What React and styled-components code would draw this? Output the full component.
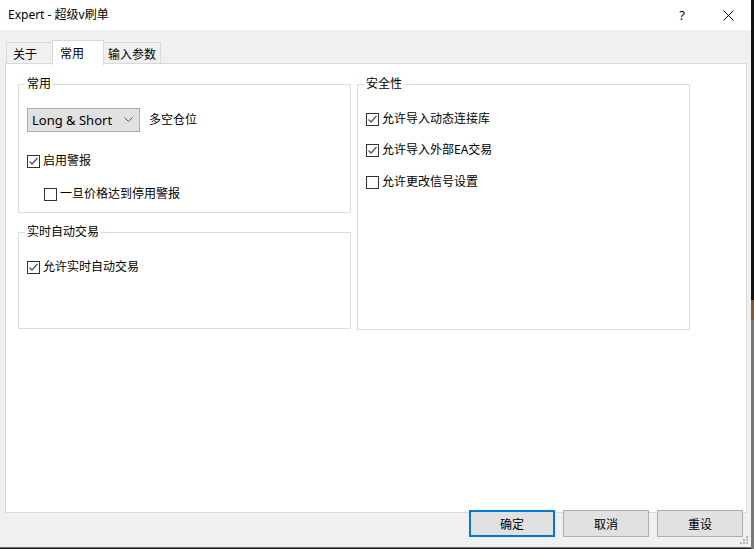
import React from "react";
import styled, { createGlobalStyle } from "styled-components";

const GlobalStyle = createGlobalStyle`
  html, body {
    margin: 0;
    padding: 0;
    background: #1e1e1e;
  }
  * {
    box-sizing: border-box;
  }
`;

const FONT = `"Segoe UI", "Noto Sans", "Noto Sans CJK SC", sans-serif`;

const Screen = styled.div`
  width: 754px;
  height: 549px;
  display: flex;
  background: #1e1e1e;
  font-family: ${FONT};
  font-size: 12px;
  color: #000;
  overflow: hidden;
`;

const Window = styled.div`
  position: relative;
  width: 751px;
  height: 548px;
  display: flex;
  flex-direction: column;
  background: #f0f0f0;
  border-bottom: 1px solid #6c6c6c;
`;

const BackStrip = styled.div`
  flex: 1;
  background: linear-gradient(#111 0 300px, #7a5a3a 300px 320px, #777 320px);
`;

//TITLE
const TitleBar = styled.div`
  height: 30px;
  flex: none;
  display: flex;
  align-items: center;
  background: #fff;
  padding-left: 8px;
`;

const Title = styled.div`
  flex: 1;
  font-size: 12px;
  line-height: 16px;
  margin-top: -1px;
`;

const TitleButton = styled.div`
  width: 46px;
  height: 30px;
  display: flex;
  align-items: center;
  justify-content: center;
  font-size: 13px;
`;

//TABS
const TabRow = styled.div`
  display: flex;
  align-items: flex-end;
  padding: 9px 0 0 6px;
  height: 34px;
  flex: none;
  position: relative;
  z-index: 1;
`;

const Tab = styled.div`
  height: ${(p) => (p.$active ? "25px" : "22px")};
  width: ${(p) => p.$w}px;
  margin-bottom: ${(p) => (p.$active ? "-1px" : "0")};
  padding-left: ${(p) => p.$pad}px;
  display: flex;
  align-items: center;
  background: ${(p) => (p.$active ? "#fff" : "#f0f0f0")};
  border: 1px solid #d9d9d9;
  border-bottom: ${(p) => (p.$active ? "none" : "1px solid #d9d9d9")};
  margin-left: ${(p) => (p.$first ? "0" : "-1px")};
  font-size: 12px;
  padding-top: ${(p) => (p.$active ? "0" : "2px")};
`;

const Panel = styled.div`
  flex: 1;
  margin: -1px 4px 0 5px;
  background: #fff;
  border: 1px solid #d9d9d9;
  padding: 12px 0 0 12px;
  display: grid;
  grid-template-columns: 333px 333px;
  align-items: start;
  column-gap: 6px;
`;

const Column = styled.div`
  display: flex;
  flex-direction: column;
  gap: 11px;
`;

const Group = styled.fieldset`
  margin: 0;
  height: ${(p) => p.$h}px;
  border: 1px solid #dcdcdc;
  padding: 0 0 0 8px;
  display: flex;
  flex-direction: column;
  align-items: flex-start;
`;

const Legend = styled.legend`
  padding: 0 2px;
  margin-left: -2px;
  font-size: 12px;
  line-height: 16px;
`;

const Row = styled.div`
  display: flex;
  align-items: center;
  margin-top: ${(p) => p.$mt}px;
  margin-left: ${(p) => p.$ml || 0}px;
  height: ${(p) => p.$h || 16}px;
`;

const Select = styled.div`
  width: 113px;
  height: 24px;
  display: flex;
  align-items: center;
  justify-content: space-between;
  background: #e1e1e1;
  border: 1px solid #adadad;
  padding: 0 6px 0 4px;
  font-size: 13px;
  margin-right: 9px;
`;

const Box = styled.span`
  width: 13px;
  height: 13px;
  flex: none;
  border: 1px solid #333;
  background: #fff;
  display: flex;
  align-items: center;
  justify-content: center;
  margin-right: 3px;
`;

const Label = styled.span`
  font-size: 12px;
  line-height: 16px;
  white-space: nowrap;
`;

//FOOTER
const ButtonRow = styled.div`
  display: flex;
  justify-content: flex-end;
  gap: 8px;
  padding: 0 8px 0 0;
  margin-top: -3px;
  height: 37px;
  flex: none;
`;

const Button = styled.div`
  width: 86px;
  height: 27px;
  display: flex;
  align-items: center;
  justify-content: center;
  background: #e1e1e1;
  border: ${(p) => (p.$default ? "2px solid #0078d7" : "1px solid #adadad")};
  font-size: 12px;
`;

const Grip = styled.svg`
  position: absolute;
  right: 2px;
  bottom: 2px;
`;

function Check({ checked, children, mt, ml }) {
  return (
    <Row $mt={mt} $ml={ml}>
      <Box>
        {checked && (
          <svg width="11" height="11" viewBox="0 0 11 11">
            <polyline
              points="1.5,5.5 4,8 9.5,2"
              fill="none"
              stroke="#555"
              strokeWidth="1.3"
            />
          </svg>
        )}
      </Box>
      <Label>{children}</Label>
    </Row>
  );
}

export default function App() {
  return (
    <>
      <GlobalStyle />
      <Screen>
        <Window>
          <TitleBar>
            <Title>Expert - 超级v刷单</Title>
            <TitleButton>?</TitleButton>
            <TitleButton>
              <svg width="11" height="11" viewBox="0 0 11 11">
                <path d="M0.5 0.5L10.5 10.5M10.5 0.5L0.5 10.5" stroke="#000" strokeWidth="1" />
              </svg>
            </TitleButton>
          </TitleBar>

          <TabRow>
            <Tab $first $w={47} $pad={6}>关于</Tab>
            <Tab $active $w={52} $pad={7}>常用</Tab>
            <Tab $w={58} $pad={4}>输入参数</Tab>
          </TabRow>

          <Panel>
            <Column>
              <Group $h={137}>
                <Legend>常用</Legend>
                <Row $mt={16} $h={24}>
                  <Select>
                    <span>Long &amp; Short</span>
                    <svg width="9" height="6" viewBox="0 0 9 6">
                      <polyline points="0.5,0.5 4.5,4.5 8.5,0.5" fill="none" stroke="#555" strokeWidth="1" />
                    </svg>
                  </Select>
                  <Label>多空仓位</Label>
                </Row>
                <Check checked mt={21}>启用警报</Check>
                <Check mt={17} ml={17}>一旦价格达到停用警报</Check>
              </Group>
              <Group $h={105}>
                <Legend>实时自动交易</Legend>
                <Check checked mt={19}>允许实时自动交易</Check>
              </Group>
            </Column>
            <Group $h={254}>
              <Legend>安全性</Legend>
              <Check checked mt={19}>允许导入动态连接库</Check>
              <Check checked mt={15}>允许导入外部EA交易</Check>
              <Check mt={16}>允许更改信号设置</Check>
            </Group>
          </Panel>

          <ButtonRow>
            <Button $default>确定</Button>
            <Button>取消</Button>
            <Button>重设</Button>
          </ButtonRow>

          <Grip width="10" height="10" viewBox="0 0 10 10">
            <rect x="7" y="1" width="2" height="2" fill="#b5b5b5" />
            <rect x="4" y="4" width="2" height="2" fill="#b5b5b5" />
            <rect x="7" y="4" width="2" height="2" fill="#b5b5b5" />
            <rect x="1" y="7" width="2" height="2" fill="#b5b5b5" />
            <rect x="4" y="7" width="2" height="2" fill="#b5b5b5" />
            <rect x="7" y="7" width="2" height="2" fill="#b5b5b5" />
          </Grip>
        </Window>
        <BackStrip />
      </Screen>
    </>
  );
}
